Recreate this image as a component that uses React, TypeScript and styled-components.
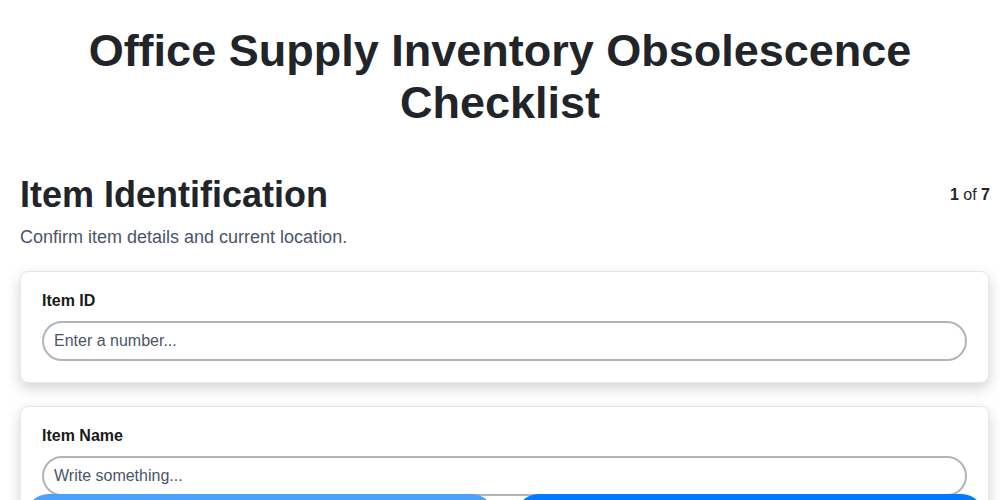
import styled, { createGlobalStyle } from "styled-components";

const GlobalStyle = createGlobalStyle`
  body {
    margin: 0;
    background: #ffffff;
    font-family: "Liberation Sans", Arial, sans-serif;
    color: #212529;
  }
  * {
    box-sizing: border-box;
  }
`;

interface IField {
  label: string;
  placeholder: string;
}

const fields: IField[] = [
  { label: "Item ID", placeholder: "Enter a number..." },
  { label: "Item Name", placeholder: "Write something..." },
  { label: "Category", placeholder: "Write something..." },
];

const App = () => {
  return (
    <>
      <GlobalStyle />
      <Header>
        <Title>Office Supply Inventory Obsolescence Checklist</Title>
      </Header>
      <Main>
        <SectionHeader>
          <SectionTitle>Item Identification</SectionTitle>
          <Progress>
            <b>1</b> of <b>7</b>
          </Progress>
        </SectionHeader>
        <SectionText>Confirm item details and current location.</SectionText>
        {fields.map((field) => (
          <Card key={field.label}>
            <Label>{field.label}</Label>
            <Input type="text" placeholder={field.placeholder} />
          </Card>
        ))}
      </Main>
      <Footer>
        <NavButton $primary={false} disabled>
          Previous
        </NavButton>
        <NavButton $primary>Next</NavButton>
      </Footer>
    </>
  );
};

export default App;

const Header = styled.header`
  padding: 25px 20px 0 20px;
`;

const Main = styled.main`
  padding: 44px 10px 80px 20px;
`;

const Title = styled.h1`
  margin: 0;
  text-align: center;
  font-size: 45px;
  line-height: 52px;
  font-weight: 700;
  color: #212529;
`;

const SectionHeader = styled.div`
  display: flex;
  justify-content: space-between;
  align-items: center;
`;

const SectionTitle = styled.h2`
  margin: 0;
  font-size: 36px;
  line-height: 43px;
  font-weight: 700;
  color: #212529;
`;

const Progress = styled.div`
  font-size: 16px;
  color: #212529;
`;

const SectionText = styled.p`
  margin: 8px 0 20px 0;
  font-size: 18px;
  line-height: 27px;
  color: #4a5568;
`;

const Card = styled.div`
  margin: 0 1px 23px 0;
  padding: 19px 21px 21px 21px;
  background: #ffffff;
  border: 1px solid #e6e8ee;
  border-radius: 8px;
  box-shadow: 0 5px 14px rgba(0, 0, 0, 0.18);
`;

const Label = styled.div`
  margin-bottom: 10px;
  font-size: 16px;
  line-height: 20px;
  font-weight: 700;
  color: #1a1a1a;
`;

const Input = styled.input`
  display: block;
  width: 100%;
  height: 40px;
  padding: 0 10px;
  border: 2px solid #adb5bd;
  border-radius: 20px;
  font-family: "Liberation Sans", Arial, sans-serif;
  font-size: 16px;
  color: #212529;
  background: #ffffff;
  outline: none;

  &::placeholder {
    color: #4a5568;
  }
`;

const Footer = styled.div`
  position: fixed;
  left: 0;
  right: 0;
  bottom: -42px;
  display: flex;
  gap: 20px;
  padding: 0 15px 0 25px;
`;

const NavButton = styled.button<{ $primary: boolean }>`
  flex: 1;
  height: 48px;
  border: none;
  border-radius: 24px;
  background-color: ${({ $primary }) => ($primary ? "#007bff" : "#4ca2f8")};
  color: white;
  font-family: "Liberation Sans", Arial, sans-serif;
  font-size: 16px;
  font-weight: 700;
`;
